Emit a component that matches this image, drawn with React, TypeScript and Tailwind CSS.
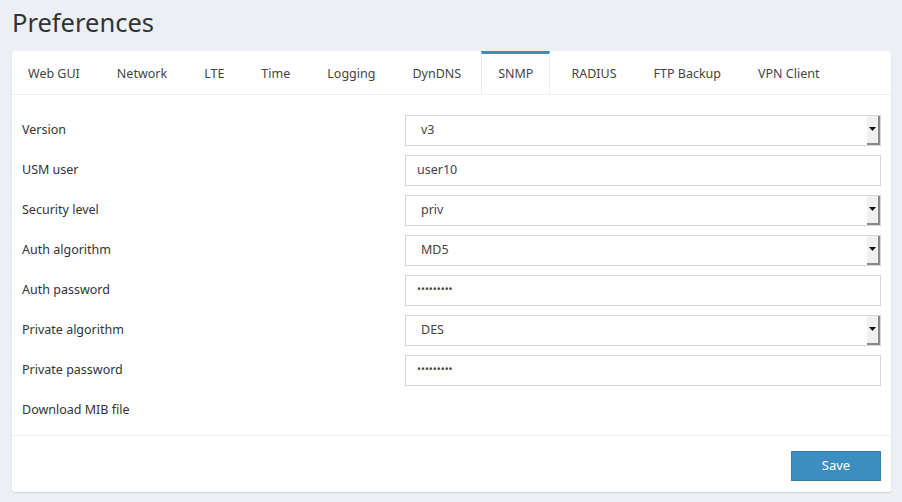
import React from 'react'

const tabs = ['Web GUI', 'Network', 'LTE', 'Time', 'Logging', 'DynDNS', 'SNMP', 'RADIUS', 'FTP Backup', 'VPN Client']

type Row = { label: string; kind: 'select' | 'text' | 'password' | 'none'; value?: string }

const dots = '\u2022\u2022\u2022\u2022\u2022\u2022\u2022\u2022\u2022'

const rows: Row[] = [
  { label: 'Version', kind: 'select', value: 'v3' },
  { label: 'USM user', kind: 'text', value: 'user10' },
  { label: 'Security level', kind: 'select', value: 'priv' },
  { label: 'Auth algorithm', kind: 'select', value: 'MD5' },
  { label: 'Auth password', kind: 'password', value: dots },
  { label: 'Private algorithm', kind: 'select', value: 'DES' },
  { label: 'Private password', kind: 'password', value: dots },
  { label: 'Download MIB file', kind: 'none' },
]

function Field({ row }: { row: Row }) {
  if (row.kind === 'none') return null
  if (row.kind === 'select') {
    return (
      <div className="flex h-[31px] w-[476px] items-stretch border border-[#d4d6de] bg-white">
        <div className="flex flex-1 items-center pl-[15px] text-[12.5px] text-[#444]">{row.value}</div>
        <div className="flex w-[13px] items-center justify-center border-r-2 border-b-2 border-[#8a8a8a] bg-[#f0f0f0]">
          <svg width="7" height="4" viewBox="0 0 7 4"><path d="M0 0h7L3.5 4z" fill="#111" /></svg>
        </div>
      </div>
    )
  }
  return (
    <div className={`flex h-[31px] w-[476px] items-center border border-[#d4d6de] bg-white pl-[11px] text-[#444] ${row.kind === 'password' ? 'text-[10.5px]' : 'text-[12.5px]'}`}>
      {row.value}
    </div>
  )
}

export default function App() {
  return (
    <div className="h-[502px] w-[902px] bg-[#eceff4] px-[12px] pt-[6px] font-['Noto_Sans','Open_Sans',sans-serif] text-[#333]">
      <h1 className="h-[45px] text-[25.5px] leading-[32px] text-[#333]">Preferences</h1>

      <div className="w-[879px] rounded-[3px] bg-white shadow-[0_1px_2px_rgba(0,0,0,0.12)]">
        {/* Tabs */}
        <div className="flex h-[44px] border-b border-[#eeeff2]">
          {tabs.map((t) => (
            <div
              key={t}
              className={`mr-[5px] flex items-center border-t-[3px] px-[16px] text-[12.5px] text-[#444] ${
                t === 'SNMP' ? 'ml-[-1px] mr-[4px] border-x border-x-[#eceef1] border-t-[#3d8ec0]' : 'border-t-transparent'
              }`}
            >
              {t}
            </div>
          ))}
        </div>

        {/* Form */}
        <div className="flex flex-col px-[10px] pt-[15px] pb-[5px]">
          {rows.map((r) => (
            <div key={r.label} className="flex h-[40px] items-center">
              <div className="w-[383px] text-[12.5px] text-[#333]">{r.label}</div>
              <Field row={r} />
            </div>
          ))}
        </div>

        {/* Footer */}
        <div className="flex justify-end border-t border-[#eeeff2] px-[10px] pt-[15px] pb-[11px]">
          <button className="h-[30px] w-[90px] border border-[#3580b0] bg-[#3d8ec0] text-[13px] text-white">Save</button>
        </div>
      </div>
    </div>
  )
}
